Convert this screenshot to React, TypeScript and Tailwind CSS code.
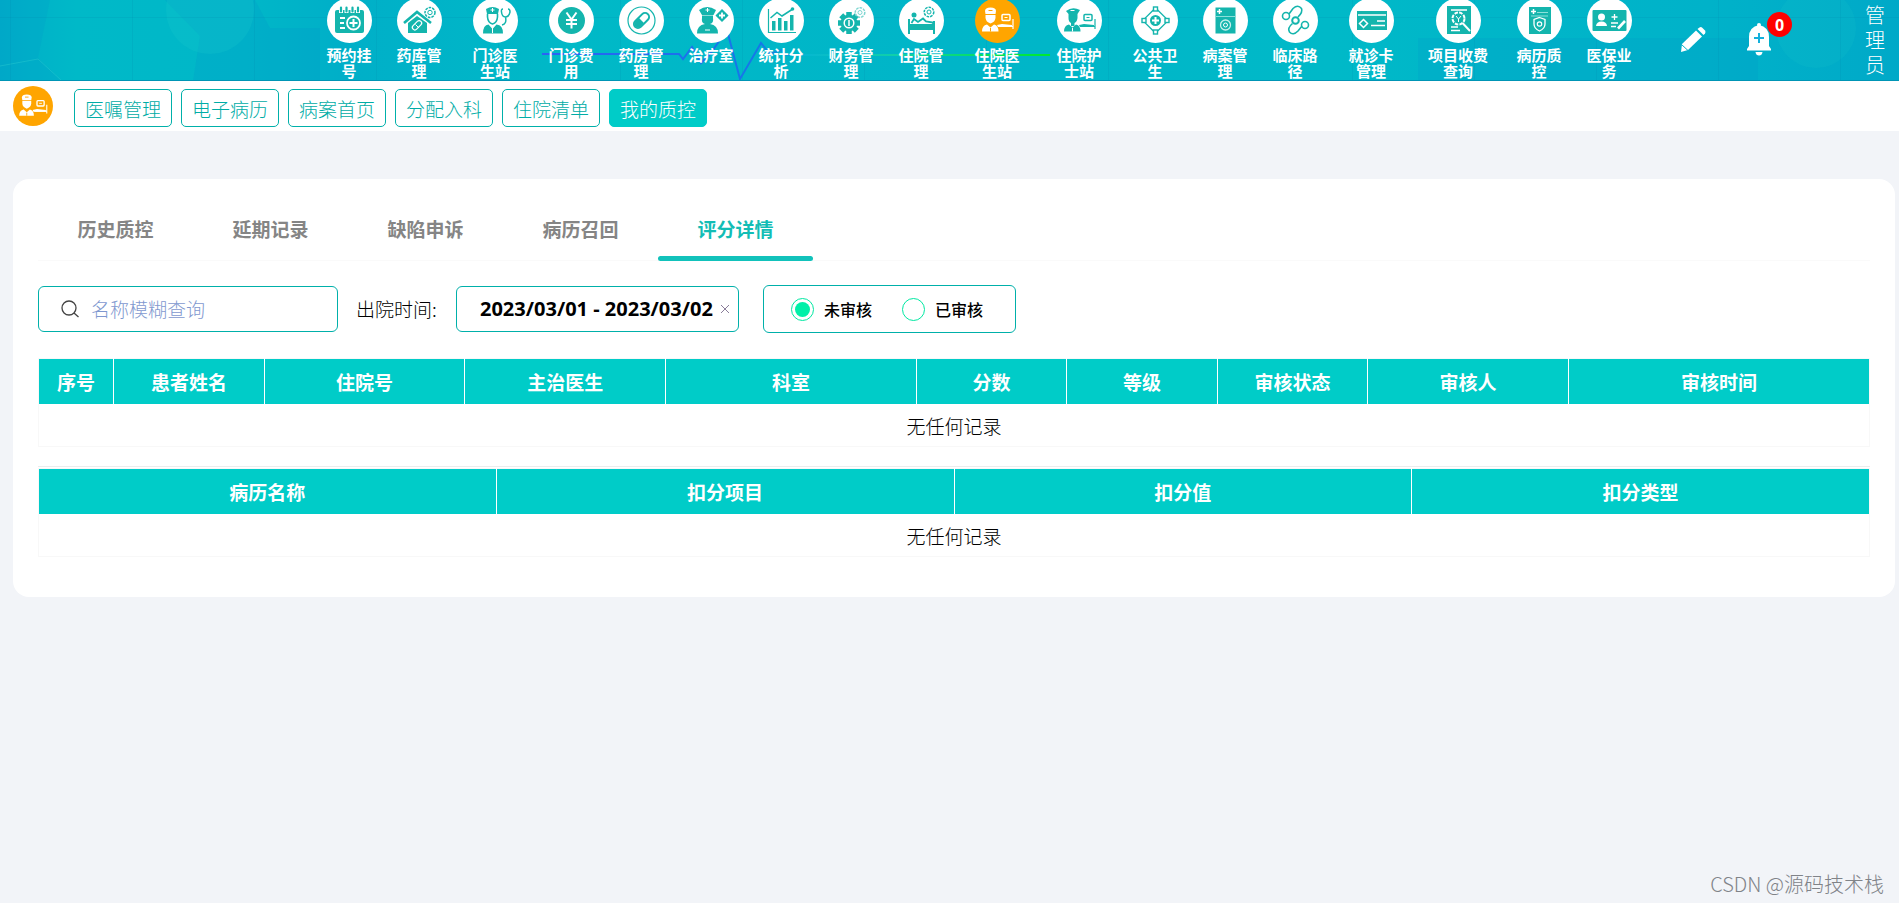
import { ReactNode, useState } from "react";
import { clsx } from "clsx";

const TEAL = "#14b5ad";

const Gear = ({ cx, cy, r, color = TEAL, teeth = 8, hole = true }: { cx: number; cy: number; r: number; color?: string; teeth?: number; hole?: boolean }) => (
  <g>
    {Array.from({ length: teeth }).map((_, i) => (
      <rect key={i} x={cx - r * 0.25} y={cy - r} width={r * 0.5} height={r * 0.5} fill={color} transform={`rotate(${(360 / teeth) * i} ${cx} ${cy})`} />
    ))}
    <circle cx={cx} cy={cy} r={r * 0.76} fill={color} />
    {hole && <circle cx={cx} cy={cy} r={r * 0.4} fill="#fff" />}
  </g>
);

const Ward = ({ color, line, nurse = false }: { color: string; line: string; nurse?: boolean }) => (
  <g fill={color}>
    {/*Médico ou enfermeira*/}
    <path d={nurse ? "M9 13 Q15.500 8 23 12 L20.500 16 H11.500 Z" : "M10 13 Q10 9.500 15.500 9.500 Q21 9.500 21 13 L20.500 16 H10.500 Z"} />
    <path d={nurse ? "M11.500 16 H20.500 V20 Q20 24 17.500 25 V28 H14 V25 Q11.500 24 11.500 20 Z" : "M10.500 17 H20.500 V20 Q20 24 15.500 25.500 Q11 24 10.500 20 Z"} />
    <path d="M7 33.500 Q7 27.500 12 26.500 L15.500 29.500 L19 26.500 Q23.500 27.500 23.500 33.500 Z" />
    <path d="M13.500 12.500 H17.500 M15.500 30 V33.500" stroke={line} strokeWidth="1" fill="none" />
    {/*Monitor e cama*/}
    <rect x="27" y="16.500" width="8" height="6" rx="1" fill="none" stroke={color} strokeWidth="1.500" />
    <path d="M29.500 19.500 H32.500" stroke={color} strokeWidth="1" />
    <path d="M22 27 L27 26 L37 27 V29 H23 Z" />
    <path d="M38 21 V31 M24 28.500 H38" stroke={color} strokeWidth="1.200" fill="none" />
  </g>
);

const icons: Record<string, ReactNode> = {
  calendar: (
    <g>
      <rect x="8" y="12" width="29" height="23" rx="2" fill={TEAL} />
      <path d="M14 9 V15 M19.500 9 V15 M25.500 9 V15 M31 9 V15" stroke="#fff" strokeWidth="4" />
      <path d="M14 9.500 V13.500 M19.500 9.500 V13.500 M25.500 9.500 V13.500 M31 9.500 V13.500" stroke={TEAL} strokeWidth="2.200" strokeLinecap="round" />
      <path d="M13 20 H18 M13 25 H17 M13 30 H18" stroke="#fff" strokeWidth="2.200" />
      <circle cx="26.500" cy="25" r="6.500" fill="none" stroke="#fff" strokeWidth="1.800" />
      <path d="M26.500 21 V29 M22.500 25 H30.500" stroke="#fff" strokeWidth="2" />
    </g>
  ),
  warehouse: (
    <g>
      <path d="M7 25 L20 14 L34 25" fill="none" stroke={TEAL} strokeWidth="2.600" />
      <path d="M11 25 L20 18 L30 25 V35 H11 Z" fill={TEAL} />
      <rect x="17" y="22" width="5" height="11" rx="2.500" fill="none" stroke="#fff" strokeWidth="1.200" transform="rotate(45 20 28)" />
      <path d="M18.500 26.500 L22 30" stroke="#fff" />
      <circle cx="33" cy="14.500" r="5" fill="none" stroke={TEAL} strokeWidth="1.500" strokeDasharray="2.600 1" />
      <circle cx="33" cy="14.500" r="2.200" fill="none" stroke={TEAL} />
    </g>
  ),
  doctor: (
    <g>
      <path d="M13 11 Q19.500 7 26 11 L25 16 H14 Z" fill={TEAL} />
      <path d="M19.500 10 V14 M17.500 12 H21.500" stroke="#fff" />
      <path d="M14.500 16 V19 Q15 25 19.500 26 Q24 25 24.500 19 V16" fill="none" stroke={TEAL} strokeWidth="1.600" />
      <path d="M10 35.500 Q10 27 15.500 26.500 L19.500 31 L23.500 26.500 Q30 27 30 35.500 Z" fill={TEAL} />
      <path d="M19.500 30 V35" stroke="#fff" />
      <path d="M30 11 Q28 11 28.500 14 Q29 19 32.500 19 Q36 19 37 14 Q37 11 35 11 M32.500 19 Q34 26 29 27" fill="none" stroke={TEAL} strokeWidth="1.500" />
    </g>
  ),
  yen: (
    <g>
      <circle cx="22.500" cy="22.500" r="13.500" fill={TEAL} />
      <path d="M17.500 14.500 L22.500 21.500 L27.500 14.500 M22.500 21.500 V30.500 M17 22 H28 M17 26 H28" fill="none" stroke="#fff" strokeWidth="2" />
    </g>
  ),
  pill: (
    <g fill="none" stroke={TEAL}>
      <circle cx="22.500" cy="22.500" r="13.500" strokeWidth="1.200" />
      <g transform="rotate(45 22.500 22.500)">
        <rect x="18.500" y="13.500" width="8" height="18" rx="4" strokeWidth="2" />
        <path d="M19 22.500 H26 V27 Q26 31 22.500 31 Q19 31 19 27 Z" fill={TEAL} stroke="none" />
      </g>
    </g>
  ),
  nurse: (
    <g fill={TEAL}>
      <path d="M10 12 Q18 6 27 12 L24.500 17 H13 Z" />
      <path d="M18.500 10 V14 M16.500 12 H20.500" stroke="#fff" />
      <path d="M13 17.500 H24 V20 Q25 25 21 26 Q29 27 29 35.500 H8 Q8 27 16 26 Q12 25 13 20 Z" />
      <path d="M16 32 H21" stroke="#fff" />
      <path d="M33 12 L38.500 17.500 L33 23 L27.500 17.500 Z" stroke={TEAL} strokeWidth="1.500" />
      <path d="M33 14.500 V20.500 M30 17.500 H36" stroke="#fff" strokeWidth="1.800" />
    </g>
  ),
  chart: (
    <g fill={TEAL}>
      <path d="M9.500 11 V34.500 H37" fill="none" stroke={TEAL} strokeWidth="1.200" />
      <path d="M13 23 H16.500 V32.500 H13 Z M19 20 H22.500 V32.500 H19 Z M25 23 H28.500 V32.500 H25 Z M31 17 H34.500 V32.500 H31 Z" />
      <path d="M11.500 20 L18 14.500 L23 18 L33 11.500" fill="none" stroke={TEAL} strokeWidth="1.500" />
      <circle cx="33.500" cy="11" r="1.800" />
    </g>
  ),
  finance: (
    <g>
      <Gear cx={20} cy={25} r={11} hole={false} />
      <circle cx="20" cy="25" r="4.800" fill={TEAL} stroke="#fff" strokeWidth="1.500" />
      <path d="M20 22 V28" stroke="#fff" strokeWidth="1.500" />
      <circle cx="31" cy="14.500" r="4.800" fill="none" stroke="#7fd6d1" strokeWidth="1.500" strokeDasharray="2.600 1" />
      <circle cx="31" cy="14.500" r="2" fill="none" stroke="#7fd6d1" />
    </g>
  ),
  bed: (
    <g fill={TEAL}>
      <path d="M9 21 H11 V26 H34 V23 H36 V36 H34 V32 H11 V36 H9 Z" />
      <circle cx="15" cy="17" r="2.500" />
      <path d="M12.500 25 L15 21 L19 24 L24 20.500 L27 23.500 L34 24.500 V26" fill="none" stroke={TEAL} strokeWidth="1.800" />
      <circle cx="30" cy="14" r="4.800" fill="none" stroke={TEAL} strokeWidth="1.500" strokeDasharray="2.600 1" />
      <circle cx="30" cy="14" r="2" fill="none" stroke={TEAL} />
    </g>
  ),
  wardDoctor: <Ward color="#fff" line="#ffa500" />,
  wardNurse: <Ward color={TEAL} line="#fff" nurse />,
  publicHealth: (
    <g fill="none" stroke={TEAL} strokeWidth="1.400">
      <rect x="13.500" y="13.500" width="18" height="18" rx="3" transform="rotate(45 22.500 22.500)" />
      <circle cx="22.500" cy="22.500" r="5.500" fill={TEAL} stroke="none" />
      <path d="M22.500 19 V26 M19 22.500 H26" stroke="#fff" strokeWidth="2" />
      <g fill="#fff">
        <rect x="20.500" y="9" width="4" height="4" />
        <rect x="20.500" y="32" width="4" height="4" />
        <rect x="9" y="20.500" width="4" height="4" />
        <rect x="32" y="20.500" width="4" height="4" />
      </g>
    </g>
  ),
  records: (
    <g>
      <rect x="12.500" y="9.500" width="20" height="26" fill={TEAL} />
      <path d="M16.500 11 V16 M14 13.500 H19" stroke="#fff" strokeWidth="1.500" />
      <path d="M13 18.500 H32" stroke="#8be0da" />
      <circle cx="22.500" cy="27" r="5" fill="none" stroke="#c5f0ed" strokeWidth="1.300" />
      <circle cx="22.500" cy="27" r="2" fill="none" stroke="#fff" />
    </g>
  ),
  pathway: (
    <g fill="none" stroke={TEAL} strokeWidth="1.600">
      <path d="M16 16 L20 10.500 Q25 6 28.500 10.500 Q30 14 25 19 M19.500 25.500 Q14 30 16.500 34 Q20 38 25 33 L29 28" />
      <circle cx="13" cy="18" r="3.500" />
      <circle cx="22.500" cy="22.500" r="3.300" strokeWidth="2" />
      <circle cx="32" cy="27" r="3.500" />
    </g>
  ),
  card: (
    <g>
      <rect x="8" y="13" width="30" height="19" fill={TEAL} />
      <path d="M9 17 H37 M28 23 H36 M22 27.500 H36" stroke="#fff" strokeWidth="1.500" />
      <path d="M14.500 21.500 L18.500 25.500 L14.500 29.500 L10.500 25.500 Z" fill="none" stroke="#fff" strokeWidth="1.500" />
    </g>
  ),
  feeQuery: (
    <g>
      <rect x="11" y="8" width="24" height="28" fill={TEAL} />
      <path d="M15 12 H31 M15 29 H22 M15 32.500 H24" stroke="#fff" strokeWidth="1.300" />
      <circle cx="22.500" cy="20.500" r="6" fill="none" stroke="#fff" strokeWidth="2" strokeDasharray="3.500 1.200" />
      <path d="M20 18 L22.500 21 L25 18 M22.500 21 V24" fill="none" stroke="#fff" />
      <path d="M26.500 25 L34 33" stroke="#fff" strokeWidth="2" />
    </g>
  ),
  quality: (
    <g>
      <rect x="12" y="9" width="22" height="27" fill={TEAL} />
      <path d="M16.500 11 V16 M14 13.500 H19" stroke="#fff" strokeWidth="1.500" />
      <path d="M20 14.500 H31 M14 18 H31" stroke="#8be0da" />
      <path d="M22.500 19.500 L28 21.500 V26 Q28 30.500 22.500 33 Q17 30.500 17 26 V21.500 Z" fill="none" stroke="#fff" strokeWidth="1.300" />
      <circle cx="22.500" cy="26" r="2.200" fill="none" stroke="#fff" strokeWidth="1.200" />
    </g>
  ),
  insurance: (
    <g>
      <rect x="5.500" y="12" width="34" height="21" rx="1" fill={TEAL} />
      <circle cx="14.500" cy="19" r="3.500" fill="#fff" />
      <path d="M9 28 Q9.500 23.500 14.500 23.500 Q19.500 23.500 20 28 Z" fill="#fff" />
      <path d="M27.500 16 V22 M24.500 19 H30.500 M24 25 H31 M24 28.500 H29" stroke="#fff" strokeWidth="1.300" />
      <path d="M31 30.500 L38 23" stroke="#fff" strokeWidth="2.600" />
    </g>
  ),
};

type MenuItem = { icon: string; label: string; size?: "sm" | "md" | "lg"; active?: boolean };

const menu: MenuItem[] = [
  { icon: "calendar", label: "预约挂号" },
  { icon: "warehouse", label: "药库管理" },
  { icon: "doctor", label: "门诊医生站", size: "md" },
  { icon: "yen", label: "门诊费用" },
  { icon: "pill", label: "药房管理" },
  { icon: "nurse", label: "治疗室" },
  { icon: "chart", label: "统计分析" },
  { icon: "finance", label: "财务管理" },
  { icon: "bed", label: "住院管理" },
  { icon: "wardDoctor", label: "住院医生站", size: "md", active: true },
  { icon: "wardNurse", label: "住院护士站", size: "md" },
  { icon: "publicHealth", label: "公共卫生" },
  { icon: "records", label: "病案管理" },
  { icon: "pathway", label: "临床路径" },
  { icon: "card", label: "就诊卡管理", size: "md" },
  { icon: "feeQuery", label: "项目收费查询", size: "lg" },
  { icon: "quality", label: "病历质控" },
  { icon: "insurance", label: "医保业务" },
];

const subMenu = ["医嘱管理", "电子病历", "病案首页", "分配入科", "住院清单", "我的质控"];
const tabs = ["历史质控", "延期记录", "缺陷申诉", "病历召回", "评分详情"];

const scoreColumns = [
  { label: "序号", width: "w-[75px]" },
  { label: "患者姓名", width: "w-[150px]" },
  { label: "住院号", width: "w-[200px]" },
  { label: "主治医生", width: "w-[200px]" },
  { label: "科室", width: "w-[250px]" },
  { label: "分数", width: "w-[150px]" },
  { label: "等级", width: "w-[150px]" },
  { label: "审核状态", width: "w-[150px]" },
  { label: "审核人", width: "w-[200px]" },
  { label: "审核时间", width: "w-[300px]" },
];

const deductionColumns = [
  { label: "病历名称", width: "w-1/4" },
  { label: "扣分项目", width: "w-1/4" },
  { label: "扣分值", width: "w-1/4" },
  { label: "扣分类型", width: "w-1/4" },
];

const HeaderBackground = () => (
  <svg className="absolute inset-0 h-full w-full" aria-hidden="true">
    <defs>
      <linearGradient id="headerFill" x1="0" x2="1" y1="0" y2="0">
        <stop offset="0" stopColor="#00adc8" />
        <stop offset="0.040" stopColor="#00b9c8" />
        <stop offset="0.130" stopColor="#00b7c8" />
        <stop offset="0.180" stopColor="#00afc8" />
        <stop offset="0.300" stopColor="#00b9c7" />
        <stop offset="0.500" stopColor="#00b5c8" />
        <stop offset="0.700" stopColor="#00b9c8" />
        <stop offset="0.900" stopColor="#00b2c9" />
        <stop offset="1" stopColor="#00a9c8" />
      </linearGradient>
      <linearGradient id="pulse" gradientUnits="userSpaceOnUse" x1="542" x2="1050" y1="0" y2="0">
        <stop offset="0" stopColor="#2b62f5" />
        <stop offset="0.430" stopColor="#1478e8" />
        <stop offset="0.520" stopColor="#06b8d0" />
        <stop offset="0.700" stopColor="#10d0a8" />
        <stop offset="1" stopColor="#00ea2c" />
      </linearGradient>
      <pattern id="grid" width="122" height="64" patternUnits="userSpaceOnUse" x="10" y="17">
        <path d="M0.500 0 V64 M0 0.500 H122" stroke="#007fa6" strokeOpacity="0.150" fill="none" />
      </pattern>
    </defs>
    <rect width="100%" height="100%" fill="url(#headerFill)" />
    <path d="M165 0 L200 36 L193 81 H320 V28 H270 L255 0 Z" fill="#0098c6" fillOpacity="0.250" />
    <path d="M50 0 L38 58 L62 81 H0 V0 Z" fill="#0098c6" fillOpacity="0.180" />
    <path d="M0 66 L38 59 L62 81" stroke="#2fd0d2" strokeOpacity="0.400" fill="none" />
    <circle cx="210" cy="10" r="44" fill="#19c8cc" fillOpacity="0.250" />
    <circle cx="1816" cy="28" r="40" fill="#19c8cc" fillOpacity="0.150" />
    <rect x="1418" width="340" y="38" height="43" fill="#0098c6" fillOpacity="0.200" />
    <rect width="100%" height="100%" fill="url(#grid)" />
    <path d="M542 54 H679 L683 59 L692 47 L701 63 L710 54 L727 30 L740 79 L761 43 L770 54 L781 50 L786 55 H1050" fill="none" stroke="url(#pulse)" strokeWidth="2" />
    <rect y="80" width="100%" height="1" fill="#0095b5" />
  </svg>
);

const DataTable = ({ columns }: { columns: { label: string; width: string }[] }) => (
  <table className="w-full table-fixed border-collapse border border-[#f8f8f8] text-[19px]">
    <thead>
      <tr className="h-[45px] bg-[#00ccc8] text-white">
        {columns.map((col) => (
          <th key={col.label} className={clsx(col.width, "border-x border-x-white pt-0.5 font-bold first:border-l-[#f8f8f8] last:border-r-[#f8f8f8]")}>{col.label}</th>
        ))}
      </tr>
    </thead>
    <tbody>
      <tr className="h-[43px]">
        <td colSpan={columns.length} className="pt-0.5 text-center font-light text-black">无任何记录</td>
      </tr>
    </tbody>
  </table>
);

const App = () => {

  const [activeTab, setActiveTab] = useState("评分详情");
  const [audit, setAudit] = useState("未审核");

  return (
    <div className="relative min-h-screen bg-[#f2f4f8] font-['Noto_Sans_CJK_SC',sans-serif] text-black">

      {/*Header*/}
      <header className="relative h-[81px] overflow-hidden">
        <HeaderBackground />
        <div className="relative flex h-full pl-[314px] pr-3.5">
          <nav className="-mt-0.5 flex">
            {menu.map((item) => (
              <a
                key={item.label}
                href="#"
                className={clsx(
                  "flex shrink-0 flex-col items-center gap-1 text-center text-[15px] leading-4 font-bold text-white",
                  item.size === "lg" ? "w-[92px] px-4" : item.size === "md" ? "w-[82px] px-[18px]" : "w-[70px] px-3"
                )}
              >
                <svg className="h-[45px] w-[45px] shrink-0" viewBox="0 0 45 45" aria-hidden="true">
                  <circle cx="22.500" cy="22.500" r="22.500" fill={item.active ? "#ffa500" : "#fff"} />
                  {icons[item.icon]}
                </svg>
                <span>{item.label}</span>
              </a>
            ))}
          </nav>

          <div className="ml-auto flex">
            <button type="button" aria-label="编辑" className="mt-[26px] h-7 w-7">
              <svg viewBox="0 0 28 28" className="h-7 w-7" fill="#fff">
                <path d="M3 18 L17 4.500 L23 10.500 L9 24 L2 26 Z" />
                <path d="M18.500 3 L20.500 1.500 Q22 0.500 23.500 2 L26 4.500 Q27 6 26 7.500 L24.500 9 Z" />
                <path d="M2.500 18.500 L9 24.500" stroke="#00b2c9" />
              </svg>
            </button>
            <button type="button" aria-label="通知" className="relative mt-[22px] ml-10 h-[34px] w-6">
              <svg viewBox="0 0 24 34" className="h-[34px] w-6" fill="#fff">
                <circle cx="12" cy="3" r="2" />
                <path d="M12 3 Q22 5 22 15 V24 L24 27 V28.500 H0 V27 L2 24 V15 Q2 5 12 3 Z" />
                <path d="M8.500 30 H15.500 Q15 33.500 12 33.500 Q9 33.500 8.500 30 Z" />
                <path d="M12 11 V21 M7 16 H17" stroke="#14b0dc" strokeWidth="2" />
              </svg>
              <span className="absolute -top-[10px] left-5 flex h-[25px] w-[25px] items-center justify-center rounded-full bg-[#ff0000] font-['Open_Sans',sans-serif] text-base font-bold text-white">0</span>
            </button>
            <div className="mt-0.5 ml-[94px] w-5 text-xl leading-[25px] font-light text-white">管理员</div>
          </div>
        </div>
      </header>

      {/*Submenu*/}
      <div className="flex h-[50px] items-center bg-white pl-[13px]">
        <svg className="h-10 w-10" viewBox="0 0 45 45" aria-hidden="true">
          <circle cx="22.500" cy="22.500" r="22.500" fill="#ffa500" />
          {icons.wardDoctor}
        </svg>
        <div className="mt-1 ml-[21px] flex gap-[9px]">
          {subMenu.map((label) => (
            <button
              key={label}
              type="button"
              className={clsx(
                "h-[38px] rounded-[5px] border px-2.5 pt-0.5 text-[19px] font-light",
                label === "我的质控" ? "border-[#00ccc8] bg-[#00ccc8] text-white" : "border-[#00b0aa] text-[#00aca6]"
              )}
            >
              {label}
            </button>
          ))}
        </div>
      </div>

      <main className="mt-12 mr-1 ml-[13px] rounded-2xl bg-white px-[25px] pt-5 pb-10">

        {/*Tabs*/}
        <div className="flex h-[62px] border-b border-[#fafafa]" role="tablist">
          {tabs.map((tab) => (
            <button
              key={tab}
              type="button"
              role="tab"
              aria-selected={activeTab === tab}
              onClick={() => setActiveTab(tab)}
              className={clsx(
                "relative w-[155px] text-[19px] font-bold",
                activeTab === tab ? "text-[#12bdb5]" : "text-[#858585]"
              )}
            >
              {tab}
              {activeTab === tab && <span className="absolute inset-x-0 -bottom-px h-[5px] rounded-sm bg-[#12c2bb]"></span>}
            </button>
          ))}
        </div>

        {/*Filters*/}
        <div className="mt-6 flex h-12 items-center">
          <label className="flex h-[46px] w-[300px] items-center rounded-md border border-[#00b0aa] pl-[21px]">
            <svg className="h-5 w-5" viewBox="0 0 20 20" fill="none" stroke="#444" strokeWidth="1.300">
              <circle cx="9" cy="9" r="7" />
              <path d="M14 14 L18.500 18" />
            </svg>
            <input type="text" aria-label="名称模糊查询" placeholder="名称模糊查询" className="ml-[11px] w-[220px] text-[19px] font-light outline-none placeholder:text-[#7f98cf]" />
          </label>

          <label htmlFor="dischargeDate" className="ml-[18px] w-[100px] text-[19px] font-light">出院时间:</label>
          <div className="flex h-[46px] w-[283px] items-center rounded-md border border-[#00b0aa] pl-[23px]">
            <input id="dischargeDate" type="text" defaultValue="2023/03/01 - 2023/03/02" className="w-[237px] font-['Open_Sans',sans-serif] text-xl font-bold outline-none" />
            <button type="button" aria-label="清除" className="ml-0.5">
              <svg className="h-3 w-3" viewBox="0 0 12 12" stroke="#8a7d99">
                <path d="M2 2 L10 10 M10 2 L2 10" />
              </svg>
            </button>
          </div>

          <fieldset className="ml-6 flex h-12 w-[253px] items-center gap-[30px] rounded-md border border-[#00b0aa] pl-[27px]">
            {["未审核", "已审核"].map((status) => (
              <label key={status} className="flex items-center gap-2.5 text-base font-medium">
                <input
                  type="radio"
                  name="audit"
                  value={status}
                  checked={audit === status}
                  onChange={() => setAudit(status)}
                  className="h-[23px] w-[23px] appearance-none rounded-full border border-[#00e8a2] bg-clip-content p-[3px] checked:bg-[#00f0a8]"
                />
                {status}
              </label>
            ))}
          </fieldset>
        </div>

        <div className="mt-[25px]">
          <DataTable columns={scoreColumns} />
        </div>
        <div className="mt-[19px] border-t border-[#ececec] pt-px">
          <DataTable columns={deductionColumns} />
        </div>
      </main>

      <footer className="absolute right-[15px] bottom-[5px] text-xl leading-7 font-light text-[#808388]">CSDN @源码技术栈</footer>
    </div>
  );
}

export default App;
